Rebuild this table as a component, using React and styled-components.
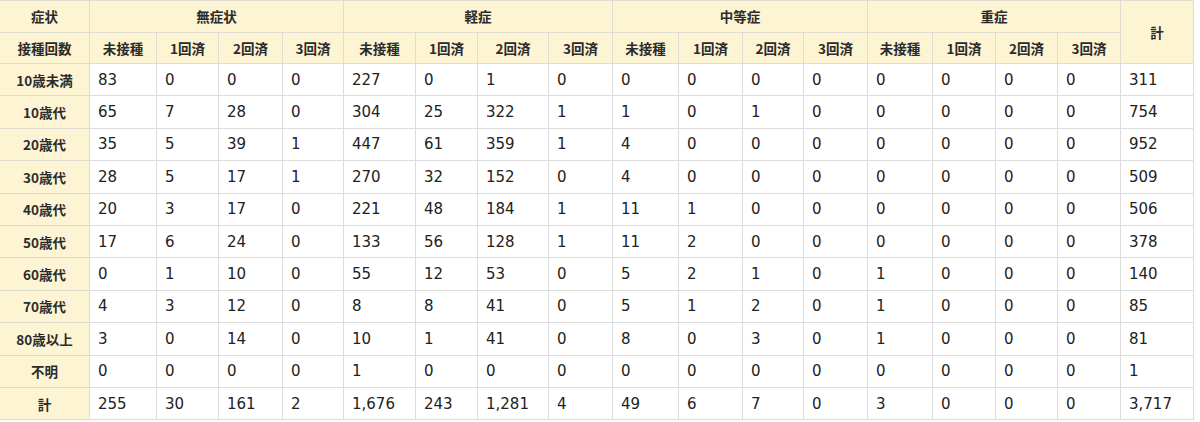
import React from "react";
import styled, { createGlobalStyle } from "styled-components";

const Global = createGlobalStyle`
  html, body { margin: 0; padding: 0; background: #ffffff; }
  body { font-family: "DejaVu Sans", "Noto Sans CJK JP", sans-serif; }
`;

const Table = styled.table`
  border-collapse: collapse;
  table-layout: fixed;
  width: 1193px;
  margin-left: -1px;
  color: #222;
`;

const Th = styled.th`
  background: #fdf4d3;
  border: 1px solid #dedbd0;
  font-family: "Noto Sans CJK JP", sans-serif;
  font-weight: 700;
  font-size: 13.5px;
  color: #2b2b2b;
  text-align: center;
  vertical-align: middle;
  padding: 0 4px;
  height: ${(p) => (p.$head ? "30.5px" : "31.4px")};
  white-space: nowrap;
`;

const Td = styled.td`
  border: 1px solid #dcdcdc;
  font-family: "DejaVu Sans", "Noto Sans CJK JP", sans-serif;
  font-size: 15px;
  color: #222;
  text-align: left;
  vertical-align: middle;
  padding: 0 0 0 8px;
  height: 31.4px;
  background: #fff;
`;

const widths = [90, 67, 62, 64, 61, 72, 62, 71, 64, 66, 64, 61, 64, 65, 63, 62, 63, 73];

const groups = ["無症状", "軽症", "中等症", "重症"];
const doses = ["未接種", "1回済", "2回済", "3回済"];

const rows = [
  ["10歳未満", "83 0 0 0 227 0 1 0 0 0 0 0 0 0 0 0 311"],
  ["10歳代", "65 7 28 0 304 25 322 1 1 0 1 0 0 0 0 0 754"],
  ["20歳代", "35 5 39 1 447 61 359 1 4 0 0 0 0 0 0 0 952"],
  ["30歳代", "28 5 17 1 270 32 152 0 4 0 0 0 0 0 0 0 509"],
  ["40歳代", "20 3 17 0 221 48 184 1 11 1 0 0 0 0 0 0 506"],
  ["50歳代", "17 6 24 0 133 56 128 1 11 2 0 0 0 0 0 0 378"],
  ["60歳代", "0 1 10 0 55 12 53 0 5 2 1 0 1 0 0 0 140"],
  ["70歳代", "4 3 12 0 8 8 41 0 5 1 2 0 1 0 0 0 85"],
  ["80歳以上", "3 0 14 0 10 1 41 0 8 0 3 0 1 0 0 0 81"],
  ["不明", "0 0 0 0 1 0 0 0 0 0 0 0 0 0 0 0 1"],
  ["計", "255 30 161 2 1,676 243 1,281 4 49 6 7 0 3 0 0 0 3,717"],
];

export default function App() {
  return (
    <>
      <Global />
      <Table>
        <colgroup>
          {widths.map((w, i) => (
            <col key={i} style={{ width: w }} />
          ))}
        </colgroup>
        <thead>
          <tr>
            <Th $head>症状</Th>
            {groups.map((g) => (
              <Th $head key={g} colSpan={4}>
                {g}
              </Th>
            ))}
            <Th $head rowSpan={2}>計</Th>
          </tr>
          <tr>
            <Th $head>接種回数</Th>
            {groups.map((g) =>
              doses.map((d) => (
                <Th $head key={g + d}>
                  {d}
                </Th>
              ))
            )}
          </tr>
        </thead>
        <tbody>
          {rows.map(([label, vals]) => (
            <tr key={label}>
              <Th>{label}</Th>
              {vals.split(" ").map((v, i) => (
                <Td key={i}>{v}</Td>
              ))}
            </tr>
          ))}
        </tbody>
      </Table>
    </>
  );
}
